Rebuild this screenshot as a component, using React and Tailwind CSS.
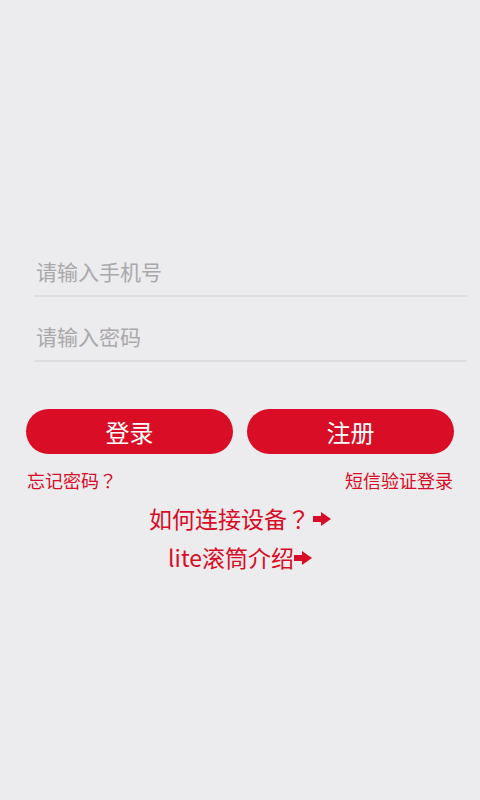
import React from "react";

function Arrow({ className }) {
  return (
    <svg className={className} viewBox="0 0 18 14" width="18" height="14">
      <polygon points="0,4 8,4 8,0 18,7 8,14 8,10 0,10" fill="#d80c26" />
    </svg>
  );
}

function Q() {
  return <span style={{ fontFamily: '"Noto Sans CJK TC", sans-serif' }}>？</span>;
}

export default function App() {
  const font = { fontFamily: '"Noto Sans CJK SC", "Noto Sans", sans-serif' };
  return (
    <div className="min-h-[800px] w-full bg-[#ecebed] pt-[232px]" style={font}>
      <div className="pl-[34px] pr-[13px]">
        <div className="h-[65px] flex items-end pb-[12px] pl-[2px] border-b-2 border-[#dedddf]">
          <span className="text-[21px] leading-[24px] text-[#a9a8aa]">请输入手机号</span>
        </div>
        <div className="h-[65px] flex items-end pb-[12px] pl-[2px] border-b-2 border-[#dedddf]">
          <span className="text-[21px] leading-[24px] text-[#a9a8aa]">请输入密码</span>
        </div>
      </div>
      <div className="mt-[47px] px-[26px] flex gap-[14px]">
        <button className="flex-1 h-[45px] rounded-full bg-[#d90d26] text-white text-[24px] leading-none flex items-center justify-center">
          登录
        </button>
        <button className="flex-1 h-[45px] rounded-full bg-[#d90d26] text-white text-[24px] leading-none flex items-center justify-center">
          注册
        </button>
      </div>
      <div className="mt-[14px] pl-[27px] pr-[27px] flex justify-between text-[18px] leading-[24px] text-[#d80c26]">
        <span>忘记密码<Q /></span>
        <span>短信验证登录</span>
      </div>
      <div className="mt-[7px] flex flex-col items-center text-[23px] leading-[39px] text-[#d80c26]">
        <div className="flex items-center">
          <span>如何连接设备<Q /></span>
          <Arrow className="ml-[3px]" />
        </div>
        <div className="flex items-center">
          <span>lite滚筒介绍</span>
          <Arrow className="" />
        </div>
      </div>
    </div>
  );
}
